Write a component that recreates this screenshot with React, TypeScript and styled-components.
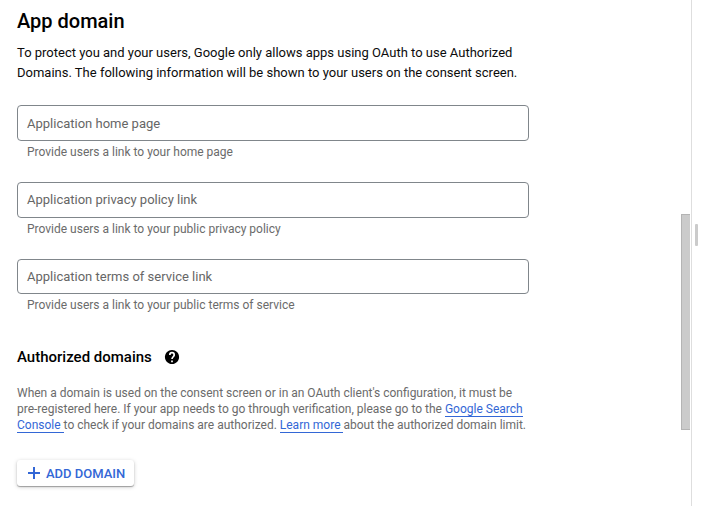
import React from "react";
import styled, { createGlobalStyle } from "styled-components";

const Global = createGlobalStyle`
  * { box-sizing: border-box; }
  body { margin: 0; background: #fff; font-family: Roboto, "Liberation Sans", sans-serif; overflow: hidden; }
`;
const Page = styled.div`
  display: flex;
  width: 709px;
  height: 506px;
  background: #fff;
`;
const Content = styled.main`
  flex: 1;
  padding: 9px 0 0 17px;
`;
const Title = styled.h1`
  margin: 0;
  font-size: 20px;
  line-height: 24px;
  font-weight: 500;
  color: #000;
`;
const Intro = styled.p`
  margin: 10px 0 22.3px;
  font-size: 13px;
  line-height: 20px;
  color: #0c0c0c;
  white-space: nowrap;
`;
const Field = styled.div`
  width: 512px;
  height: 76.66px;
`;
const Box = styled.div`
  height: 35.66px;
  border: 1px solid #80868b;
  border-radius: 4px;
  padding: 0.5px 9px 0;
  font-size: 13px;
  line-height: 33px;
  color: #666;
`;
const Hint = styled.div`
  padding: 3px 10px 0;
  font-size: 12px;
  line-height: 16px;
  color: #6b6b6b;
`;
const SubHead = styled.h2`
  display: flex;
  align-items: center;
  gap: 12px;
  margin: 11.7px 0 0;
  height: 20px;
  font-size: 15px;
  font-weight: 500;
  color: #000;
`;
const Note = styled.p`
  margin: 18px 0 0;
  font-size: 12px;
  line-height: 16px;
  color: #6b6b6b;
  white-space: nowrap;
`;
const Link = styled.a`
  color: #3367d6;
  border-bottom: 1px solid #3367d6;
`;
const AddButton = styled.button`
  display: flex;
  align-items: center;
  gap: 6px;
  width: 117px;
  height: 26px;
  margin-top: 27px;
  padding: 0 0 0 11px;
  border: 0;
  border-radius: 3px;
  background: #fff;
  box-shadow: 0 1px 1px rgba(0, 0, 0, 0.3), 0 1px 4px rgba(0, 0, 0, 0.2);
  color: #3367d6;
  font: 500 13px Roboto, sans-serif;
  white-space: nowrap;
`;
const ButtonLabel = styled.span`
  padding-top: 2px;
`;
const ScrollTrack = styled.div`
  width: 11px;
  padding: 214px 1px 0 0;
  border-right: 1px solid #dedede;
`;
const ScrollThumb = styled.div`
  height: 216px;
  background: #cbcbcb;
  border: 1px solid #b4b4b4;
  border-right: 0;
`;
const Gutter = styled.div`
  width: 17px;
  padding: 224px 0 0 3px;
`;
const Grip = styled.div`
  width: 3px;
  height: 22px;
  border-radius: 1px;
  background: #cbcbcb;
`;

const fields = [
  ["Application home page", "Provide users a link to your home page"],
  ["Application privacy policy link", "Provide users a link to your public privacy policy"],
  ["Application terms of service link", "Provide users a link to your public terms of service"],
];

export default function App() {
  return (
    <Page>
      <Global />
      <Content>
        <Title>App domain</Title>
        <Intro>
          To protect you and your users, Google only allows apps using OAuth to use Authorized<br />
          Domains. The following information will be shown to your users on the consent screen.
        </Intro>
        {fields.map(([label, hint]) => (
          <Field key={label}>
            <Box>{label}</Box>
            <Hint>{hint}</Hint>
          </Field>
        ))}
        <SubHead>
          Authorized domains
          <svg width="16" height="16" viewBox="0.7 0.7 22.6 22.6">
            <path d="M12 2C6.48 2 2 6.48 2 12s4.48 10 10 10 10-4.48 10-10S17.52 2 12 2z" />
            <path d="M8.9 9a3.1 3.1 0 0 1 6.2 0c0 2.6-3.1 2.8-3.1 6M12 17v2.3" fill="none" stroke="#fff" strokeWidth="2.4" />
          </svg>
        </SubHead>
        <Note>
          When a domain is used on the consent screen or in an OAuth client's configuration, it must be<br />
          pre-registered here. If your app needs to go through verification, please go to the <Link>Google Search</Link><br />
          <Link>Console </Link>to check if your domains are authorized. <Link>Learn more </Link>about the authorized domain limit.
        </Note>
        <AddButton>
          <svg width="12" height="12" viewBox="0 0 12 12" fill="none" stroke="currentColor" strokeWidth="2">
            <path d="M6 0v12M0 6h12" />
          </svg>
          <ButtonLabel>ADD DOMAIN</ButtonLabel>
        </AddButton>
      </Content>
      <ScrollTrack><ScrollThumb /></ScrollTrack>
      <Gutter><Grip /></Gutter>
    </Page>
  );
}
